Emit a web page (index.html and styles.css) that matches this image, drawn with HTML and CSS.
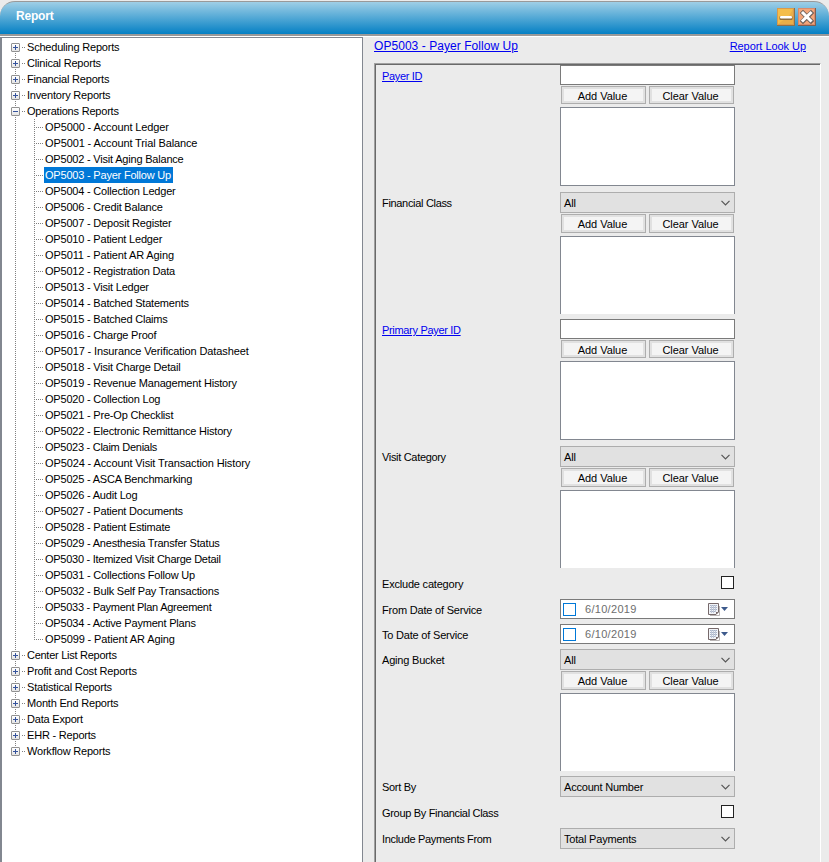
FILE: index.html
```html
<!DOCTYPE html>
<html lang="en">
<head>
<meta charset="utf-8">
<title>Report</title>
<link rel="stylesheet" href="styles.css">
</head>
<body>
<div class="window">
<header class="titlebar">
<h1>Report</h1>
<div class="window-buttons">
<svg width="18" height="18" viewBox="0 0 18 18"><rect width="18" height="18" fill="#8a7048"/><rect width="17" height="17" fill="#d99a4c"/><rect x="1" y="1" width="15" height="15" fill="#f4bd4a"/><path d="M1 16L16 16V1L12 8Z" fill="#dba045" opacity=".5"/><rect x="2.500" y="8" width="13" height="4" rx="1" fill="#8e6c3a"/><rect x="3" y="8" width="12" height="2.500" rx="1" fill="#fff"/></svg>
<svg width="18" height="18" viewBox="0 0 18 18"><rect width="18" height="18" fill="#7f5f50"/><rect width="17" height="17" fill="#d98b6c"/><rect x="1" y="1" width="15" height="15" fill="#f3a67a"/><path d="M5 5L13 13M13 5L5 13" stroke="#6f625c" stroke-width="4.600" stroke-linecap="square"/><path d="M5 5L12.500 12.500M12.500 5L5 12.500" stroke="#fff" stroke-width="3" stroke-linecap="square"/></svg>
</div>
</header>
<main class="content">
<nav class="tree">
<ul class="roots">
<li class="root"><i class="toggle plus"></i><span>Scheduling Reports</span></li>
<li class="root"><i class="toggle plus"></i><span>Clinical Reports</span></li>
<li class="root"><i class="toggle plus"></i><span>Financial Reports</span></li>
<li class="root"><i class="toggle plus"></i><span>Inventory Reports</span></li>
<li class="root"><i class="toggle"></i><span>Operations Reports</span></li>
<li class="branch"><ul class="leaves">
<li><span class="wide">OP5000 - Account Ledger</span></li>
<li><span class="wide">OP5001 - Account Trial Balance</span></li>
<li><span>OP5002 - Visit Aging Balance</span></li>
<li><span class="selected">OP5003 - Payer Follow Up</span></li>
<li><span>OP5004 - Collection Ledger</span></li>
<li><span>OP5006 - Credit Balance</span></li>
<li><span>OP5007 - Deposit Register</span></li>
<li><span>OP5010 - Patient Ledger</span></li>
<li><span class="wide">OP5011 - Patient AR Aging</span></li>
<li><span>OP5012 - Registration Data</span></li>
<li><span>OP5013 - Visit Ledger</span></li>
<li><span>OP5014 - Batched Statements</span></li>
<li><span>OP5015 - Batched Claims</span></li>
<li><span>OP5016 - Charge Proof</span></li>
<li><span class="wide">OP5017 - Insurance Verification Datasheet</span></li>
<li><span>OP5018 - Visit Charge Detail</span></li>
<li><span>OP5019 - Revenue Management History</span></li>
<li><span>OP5020 - Collection Log</span></li>
<li><span>OP5021 - Pre-Op Checklist</span></li>
<li><span>OP5022 - Electronic Remittance History</span></li>
<li><span class="narrow">OP5023 - Claim Denials</span></li>
<li><span class="wide">OP5024 - Account Visit Transaction History</span></li>
<li><span>OP5025 - ASCA Benchmarking</span></li>
<li><span>OP5026 - Audit Log</span></li>
<li><span>OP5027 - Patient Documents</span></li>
<li><span>OP5028 - Patient Estimate</span></li>
<li><span>OP5029 - Anesthesia Transfer Status</span></li>
<li><span class="narrow">OP5030 - Itemized Visit Charge Detail</span></li>
<li><span>OP5031 - Collections Follow Up</span></li>
<li><span>OP5032 - Bulk Self Pay Transactions</span></li>
<li><span class="narrow">OP5033 - Payment Plan Agreement</span></li>
<li><span>OP5034 - Active Payment Plans</span></li>
<li><span class="wide">OP5099 - Patient AR Aging</span></li>
</ul></li>
<li class="root"><i class="toggle plus"></i><span class="narrow">Center List Reports</span></li>
<li class="root"><i class="toggle plus"></i><span>Profit and Cost Reports</span></li>
<li class="root"><i class="toggle plus"></i><span>Statistical Reports</span></li>
<li class="root"><i class="toggle plus"></i><span>Month End Reports</span></li>
<li class="root"><i class="toggle plus"></i><span>Data Export</span></li>
<li class="root"><i class="toggle plus"></i><span>EHR - Reports</span></li>
<li class="root"><i class="toggle plus"></i><span>Workflow Reports</span></li>
</ul>
</nav>
<section class="report">
<div class="report-head"><a class="report-name" href="#">OP5003 - Payer Follow Up</a><a class="lookup" href="#">Report Look Up</a></div>
<div class="form">
<div class="row tall"><a class="label" href="#">Payer ID</a><div class="control"><div class="textbox"></div><div class="buttons short"><button>Add Value</button><button>Clear Value</button></div><div class="list"></div></div></div>
<div class="row tall"><span class="label">Financial Class</span><div class="control"><div class="select">All<svg width="9" height="6" viewBox="0 0 9 6"><path d="M.5 .8L4.500 4.800L8.500 .8"/></svg></div><div class="buttons"><button>Add Value</button><button>Clear Value</button></div><div class="list open"></div></div></div>
<div class="row tall"><a class="label" href="#">Primary Payer ID</a><div class="control"><div class="textbox"></div><div class="buttons short"><button>Add Value</button><button>Clear Value</button></div><div class="list"></div></div></div>
<div class="row tall"><span class="label">Visit Category</span><div class="control"><div class="select">All<svg width="9" height="6" viewBox="0 0 9 6"><path d="M.5 .8L4.500 4.800L8.500 .8"/></svg></div><div class="buttons"><button>Add Value</button><button>Clear Value</button></div><div class="list open"></div></div></div>
<div class="row"><span class="label wide">Exclude category</span><div class="control"><i class="check"></i></div></div>
<div class="row date-row"><span class="label wide">From Date of Service</span><div class="control"><div class="date"><i class="date-check"></i><span>6/10/2019</span><svg width="21" height="13" viewBox="0 0 21 13"><path d="M2 12.500H11.500V3" stroke="#b9b5b5" fill="none"/><path d="M.5 .5H10.500V9L8 11.500H.5Z" fill="#f2f4f8" stroke="#76696a"/><path d="M8 11.500V9H10.500Z" fill="#76696a"/><path d="M2 2.500H9M2 4.500H9M2 6.500H9M2 8.500H8" stroke="#aab4c8"/><path d="M3.500 2V10M5.500 2V10M7.500 2V9" stroke="#c0c8d8"/><path d="M13 4H20L16.500 8Z" fill="#3d5a8c"/></svg></div></div></div>
<div class="row date-row"><span class="label wide">To Date of Service</span><div class="control"><div class="date"><i class="date-check"></i><span>6/10/2019</span><svg width="21" height="13" viewBox="0 0 21 13"><path d="M2 12.500H11.500V3" stroke="#b9b5b5" fill="none"/><path d="M.5 .5H10.500V9L8 11.500H.5Z" fill="#f2f4f8" stroke="#76696a"/><path d="M8 11.500V9H10.500Z" fill="#76696a"/><path d="M2 2.500H9M2 4.500H9M2 6.500H9M2 8.500H8" stroke="#aab4c8"/><path d="M3.500 2V10M5.500 2V10M7.500 2V9" stroke="#c0c8d8"/><path d="M13 4H20L16.500 8Z" fill="#3d5a8c"/></svg></div></div></div>
<div class="row tall"><span class="label wide">Aging Bucket</span><div class="control"><div class="select">All<svg width="9" height="6" viewBox="0 0 9 6"><path d="M.5 .8L4.500 4.800L8.500 .8"/></svg></div><div class="buttons"><button>Add Value</button><button>Clear Value</button></div><div class="list open"></div></div></div>
<div class="row"><span class="label">Sort By</span><div class="control"><div class="select">Account Number<svg width="9" height="6" viewBox="0 0 9 6"><path d="M.5 .8L4.500 4.800L8.500 .8"/></svg></div></div></div>
<div class="row"><span class="label">Group By Financial Class</span><div class="control"><i class="check"></i></div></div>
<div class="row"><span class="label">Include Payments From</span><div class="control"><div class="select">Total Payments<svg width="9" height="6" viewBox="0 0 9 6"><path d="M.5 .8L4.500 4.800L8.500 .8"/></svg></div></div></div>
</div>
</section>
</main>
</div>
</body>
</html>
```
FILE: styles.css
```css
* { box-sizing: border-box; }
html, body { margin: 0; height: 100%; overflow: hidden; }
body {
  font: 11px/16px "Liberation Sans", Arial, sans-serif;
  letter-spacing: -0.2px;
  color: #000;
  background: #ebebeb;
}
ul { list-style: none; margin: 0; padding: 0; }
a { color: #0000f0; text-underline-offset: 1px; }
.window { display: flex; flex-direction: column; height: 862px; padding-top: 1px; }
.titlebar {
  display: flex;
  justify-content: space-between;
  flex: none;
  height: 35px;
  padding: 6px 13px 0 16px;
  background: linear-gradient(#9fcfe6, #0480c4);
  border-top: 1px solid #999;
  border-bottom: 2px solid #999;
  border-radius: 15px 15px 0 0;
}
h1 { margin: 0; font-size: 12px; line-height: 16px; color: #fff; letter-spacing: -0.2px; }
.window-buttons { display: flex; gap: 3px; }
.content { display: flex; flex: 1; min-height: 0; border-top: 1px solid #fff; }
.tree {
  flex: none;
  width: 363px;
  padding: 1px 0 0 9px;
  background: #fff;
  border: solid #828790;
  border-width: 1px 1px 0 2px;
}
.roots { background: repeating-linear-gradient(#808080 0 1px, #fff 1px 2px) 4px 8px / 1px 704px no-repeat; }
.root, .leaves li { display: flex; align-items: center; height: 16px; white-space: nowrap; }
.root span {
  margin-left: 1px;
  padding-left: 6px;
  background: repeating-linear-gradient(90deg, #808080 0 1px, #fff 1px 2px) 1px 8px / 3px 1px no-repeat;
}
.toggle {
  width: 9px;
  height: 9px;
  border: 1px solid #919191;
  border-radius: 1px;
  background: linear-gradient(#35539c, #35539c) center / 5px 1px no-repeat, linear-gradient(#fff, #e4e4e4);
}
.plus {
  background: linear-gradient(#35539c, #35539c) center / 5px 1px no-repeat, linear-gradient(#35539c, #35539c) center / 1px 5px no-repeat, linear-gradient(#fff, #e4e4e4);
}
.branch { padding-left: 23px; }
.leaves { background: repeating-linear-gradient(#808080 0 1px, #fff 1px 2px) 0 0 / 1px 521px no-repeat; }
.leaves li {
  padding-left: 10px;
  background: repeating-linear-gradient(90deg, #808080 0 1px, #fff 1px 2px) 0 8px / 9px 1px no-repeat;
}
.leaves span { padding: 0 2px 0 1px; }
.leaves .selected { color: #fff; background: #0078d7; }
.wide { letter-spacing: -0.12px; }
.narrow { letter-spacing: -0.27px; }
.report { flex: 1; min-width: 0; padding: 0 8px 0 11px; display: flex; flex-direction: column; }
.report-head { display: flex; justify-content: space-between; height: 26px; padding: 1px 15px 0 0; }
.report-name { font-size: 12px; letter-spacing: 0.05px; }
.lookup { letter-spacing: -0.05px; }
.form {
  flex: 1;
  min-height: 0;
  padding: 1px 0 0 1px;
  border: solid #a0a0a0;
  border-width: 1px 1px 0 1px;
  border-right-color: #fff;
  box-shadow: inset 1px 1px #696969;
  overflow: hidden;
}
.row { display: flex; height: 26px; padding-left: 6px; }
.row.tall { height: 127px; }
.row.date-row { height: 25px; }
.label { width: 178px; line-height: 22px; letter-spacing: -0.32px; }
.label.wide { letter-spacing: -0.2px; }
.control { width: 175px; }
.textbox { height: 20px; background: #fff; border: 1px solid #7a7a7a; }
.select {
  display: flex;
  align-items: center;
  justify-content: space-between;
  height: 21px;
  padding: 0 4px 0 3px;
  background: #e1e1e1;
  border: 1px solid #adadad;
}
.select path { fill: none; stroke: #555; stroke-width: 1.2; }
.buttons { display: flex; gap: 3px; margin: 1px 1px 3px; height: 19px; }
.buttons.short { height: 18px; }
button {
  flex: 1;
  padding: 1px 2px 0 0;
  font: inherit;
  letter-spacing: -0.05px;
  line-height: 14px;
  color: #000;
  background: #f4f4f4;
  border: 1px solid #adadad;
  box-shadow: inset 0 0 0 2px #e1e1e1;
  border-radius: 0;
}
.list { height: 79px; background: #fff; border: 1px solid #828790; }
.list.open { height: 78px; border-bottom: 0; }
.check { display: block; width: 13px; height: 13px; margin: 3px 1px 0 auto; background: #fff; border: 1px solid #222; }
.date {
  display: flex;
  align-items: center;
  height: 20px;
  padding: 0 5px 0 2px;
  background: #fff;
  border: 1px solid #7a7a7a;
  color: #6d6d6d;
  letter-spacing: 0.3px;
}
.date-check { width: 13px; height: 13px; border: 1px solid #0078d7; }
.date span { margin: 0 auto 0 9px; }
```
